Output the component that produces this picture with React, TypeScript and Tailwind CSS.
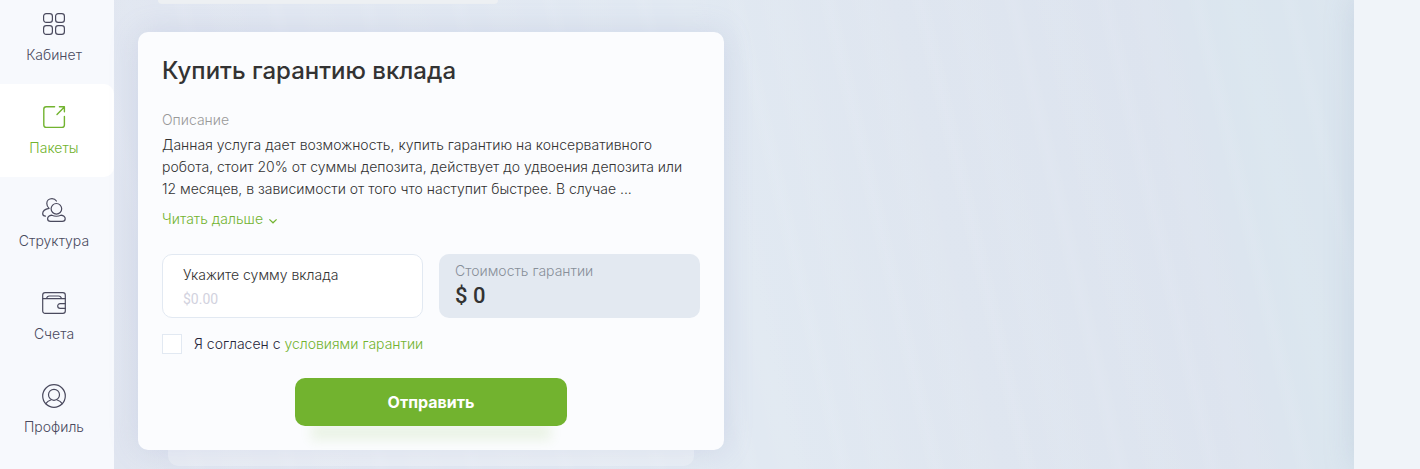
import React from "react";

interface NavItem {
  label: string;
  icon: React.FC;
  active?: boolean;
}

interface IconProps {
  children: React.ReactNode;
}

const Icon: React.FC<IconProps> = ({ children }) => (
  <svg
    className="w-6 h-6"
    viewBox="0 0 24 24"
    fill="none"
    stroke="currentColor"
    strokeWidth="1.2"
    strokeLinecap="round"
    strokeLinejoin="round"
    aria-hidden="true"
  >
    {children}
  </svg>
);

const CabinetIcon = () => (
  <Icon>
    <rect x="1.6" y="1.6" width="8.8" height="8.8" rx="2.6" />
    <rect x="13.6" y="1.6" width="8.8" height="8.8" rx="2.6" />
    <rect x="1.6" y="13.6" width="8.8" height="8.8" rx="2.6" />
    <rect x="13.6" y="13.6" width="8.8" height="8.8" rx="2.6" />
  </Icon>
);

const PackagesIcon = () => (
  <Icon>
    <path
      d="M12.6 1.8H4.2a2.4 2.4 0 0 0-2.4 2.4V20a2.4 2.4 0 0 0 2.4 2.4H20a2.4 2.4 0 0 0 2.4-2.4v-8.6M15 9.4 22.4 2M17.4 1.8h5v5"
      strokeWidth="1.4"
    />
  </Icon>
);

const StructureIcon = () => (
  <Icon>
    <circle cx="14.4" cy="10.8" r="5.3" />
    <path d="M9.800 17.2c-2.6.5-4.2 1.7-4.2 3.5 0 1.6 1.2 2.6 3 2.6h11.6c1.8 0 3-1 3-2.6 0-1.8-1.600-3-4.2-3.5-2.8 1.3-6.4 1.3-9.2 0Z" />
    <path d="M14.4 3C13.5 1.5 12 .7 10 .7 7 .7 4.800 2.7 4.800 5.5c0 2 .9 3.7 2.3 4.9C3.2 11.1.7 13 .7 15.500c0 1.500 1 2.600 2.800 2.600" />
  </Icon>
);

const AccountsIcon = () => (
  <Icon>
    <rect x="0.7" y="1.7" width="22.6" height="20.6" rx="2.4" />
    <path d="M1 7.7h22M4.6 7.4c.3-1.600 1.2-2.4 2.8-2.4h9.200c1.600 0 2.500.8 2.800 2.400" />
    <path d="M23.3 12.6h-5.2a2.4 2.4 0 0 0 0 4.8h5.2" />
  </Icon>
);

const ProfileIcon = () => (
  <Icon>
    <circle cx="12" cy="12" r="11.3" />
    <circle cx="12" cy="10.8" r="5.5" />
    <path d="M3.8 19.7c1.3-1.9 2.9-3 5-3.7M20.2 19.7c-1.3-1.9-2.9-3-5-3.7" />
  </Icon>
);

const navItems: NavItem[] = [
  { label: "Кабинет", icon: CabinetIcon },
  { label: "Пакеты", icon: PackagesIcon, active: true },
  { label: "Структура", icon: StructureIcon },
  { label: "Счета", icon: AccountsIcon },
  { label: "Профиль", icon: ProfileIcon },
];

const Sidebar: React.FC = () => (
  <nav className="w-[114px] shrink-0 bg-[#f7f9fd]">
    {navItems.map(({ label, icon: NavIcon, active }) => (
      <a
        key={label}
        href="#"
        className={`flex h-[93px] flex-col items-center justify-end gap-2 pr-[6px] pb-[18px] text-sm leading-[22px] first:h-[84px] ${
          active ? "rounded-r-[10px] bg-white text-[#72b32f]" : "text-[#4a4a5e]"
        }`}
      >
        <NavIcon />
        {label}
      </a>
    ))}
  </nav>
);

const GuaranteeForm: React.FC = () => (
  <form className="rounded-[10px] bg-[#fbfcfe] p-6 shadow-[0_0_30px_rgba(130,140,190,0.2)]">
    <h1 className="text-2xl leading-[30px] font-medium text-[#333]">Купить гарантию вклада</h1>
    <p className="mt-6 text-sm leading-5 text-[#999]">Описание</p>
    <p className="mt-1 text-sm leading-[22px] text-[#333]">
      Данная услуга дает возможность, купить гарантию на консервативного робота, стоит 20% от суммы
      депозита, действует до удвоения депозита или 12 месяцев, в зависимости от того что наступит
      быстрее. В случае ...
    </p>
    <button type="button" className="mt-2 flex items-center gap-[6px] text-sm leading-[22px] text-[#72b32f]">
      Читать дальше
      <svg className="mt-1 h-2 w-2" viewBox="0 0 8 8" fill="none" stroke="currentColor" strokeWidth="1.2" aria-hidden="true">
        <path d="M.4 2.4 4 5.8l3.6-3.4" />
      </svg>
    </button>

    <div className="mt-6 grid grid-cols-2 gap-4">
      <div className="flex h-16 flex-col justify-center gap-[2px] rounded-[10px] border border-[#e2e9f2] bg-white px-5 pt-[2px]">
        <label htmlFor="amount" className="text-sm leading-[22px] text-[#333]">
          Укажите сумму вклада
        </label>
        <input
          id="amount"
          type="text"
          placeholder="$0.00"
          className="w-full font-['Roboto',sans-serif] text-sm leading-[22px] font-normal outline-none placeholder:text-[#d2d2de]"
        />
      </div>
      <div className="h-16 rounded-[10px] bg-[#e3e9f1] px-4 py-[6px]">
        <p className="text-sm leading-[22px] text-[#888f99]">Стоимость гарантии</p>
        <p className="font-['Roboto',sans-serif] text-[22px] leading-7 font-medium text-[#333]">$ 0</p>
      </div>
    </div>

    <div className="mt-4 flex items-center gap-3 text-sm leading-5 text-[#26263a]">
      <input id="terms" type="checkbox" className="h-5 w-5 appearance-none border border-[#e2e9f2] bg-white" />
      <label htmlFor="terms">
        Я согласен с{" "}
        <a href="#" className="text-[#72b32f]">
          условиями гарантии
        </a>
      </label>
    </div>

    <button
      type="submit"
      className="mx-auto mt-6 block h-12 w-[272px] rounded-[10px] bg-[#72b32f] text-base font-bold text-white shadow-[0_30px_12px_-16px_rgba(114,179,47,0.12)]"
    >
      Отправить
    </button>
  </form>
);

const App: React.FC = () => {
  return (
    <div className="flex min-h-screen overflow-hidden bg-[repeating-linear-gradient(77deg,rgba(255,255,255,0)_0px,rgba(255,255,255,0.06)_12px,rgba(255,255,255,0)_24px,rgba(255,255,255,0.04)_50px,rgba(255,255,255,0)_90px),linear-gradient(77deg,#dfe4ef_0%,#e2e8f2_25%,#e1e9f2_52%,#dfe6f0_65%,#dde4ef_82%,#dbe6ef_87%,#dbe5ef_100%)] font-['Inter',sans-serif] font-light">
      <Sidebar />
      <main className="min-w-0 grow px-6">
        <div className="max-w-[586px]">
          {/* bottom edge of the previous block */}
          <div className="ml-5 h-1 w-[340px] rounded-b-lg bg-[#edf0f3]" />
          <div className="mt-7">
            <GuaranteeForm />
          </div>
          <div className="mx-[30px] h-4 rounded-b-[10px] bg-white/25" />
        </div>
      </main>
      <aside className="w-[66px] shrink-0 bg-[#f0f4f9] shadow-[0_0_30px_rgba(140,160,190,0.25)]" />
    </div>
  );
};

export default App;
